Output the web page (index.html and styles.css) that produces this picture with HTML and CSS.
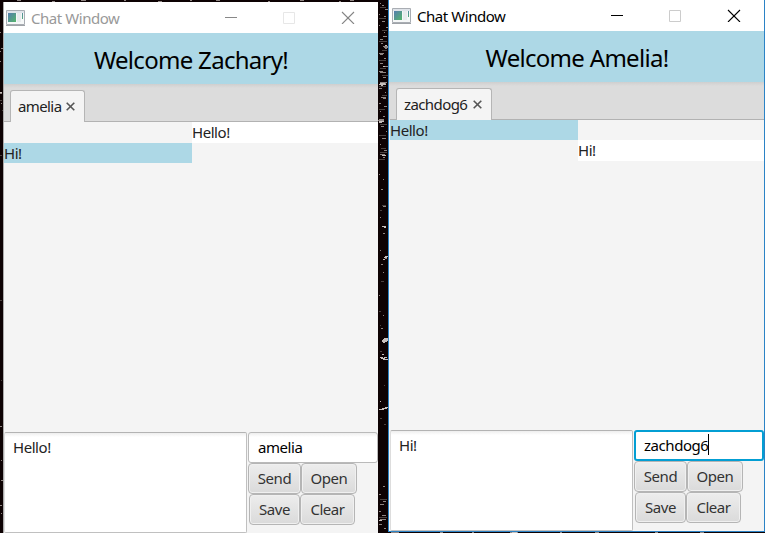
FILE: index.html
```html
<!DOCTYPE html>
<html lang="en">
<head>
<meta charset="utf-8">
<title>Chat Window</title>
<link rel="stylesheet" href="styles.css">
</head>
<body>
<main class="desktop">
  <svg class="speckles" width="765" height="533" viewBox="0 0 765 533" shape-rendering="crispEdges" aria-hidden="true">
    <path stroke="#8f8582" d="M380 3.5h1M382 5.5h2M385 9.5h3M379 14.5h1M384 16.5h2M382 21.5h3M379 25.5h1M386 27.5h2M384 32.5h1M383 36.5h4M380 39.5h3M381 43.5h2M383 46.5h5M384 47.5h4M385 48.5h2M379 53.5h5M380 54.5h3M384 58.5h2M380 63.5h3M385 66.5h3M379 71.5h4M380 72.5h6M383 77.5h3M380 82.5h7M381 83.5h5M379 88.5h3M385 92.5h1M381 97.5h5M383 98.5h3M379 103.5h2M384 106.5h3M380 111.5h1M383 116.5h2M379 119.5h5M378 120.5h6M381 126.5h3M386 131.5h1M382 138.5h4M380 144.5h1M384 150.5h3M380 154.5h5M383 157.5h2M379 174.5h1M383 179.5h1M381 189.5h2M383 206.5h3M380 217.5h1M383 233.5h2M380 250.5h1M385 258.5h2M381 264.5h2M383 272.5h1M379 295.5h1M383 315.5h1M381 328.5h2M383 486.5h2M379 494.5h2M383 501.5h3M380 504.5h4M379 511.5h2M382 515.5h4M380 519.5h6M379 524.5h3M384 528.5h2M0 32.5h1M1 48.5h2M0 51.5h1M0 61.5h1M0 93.5h2M1 103.5h1M0 426.5h2M1 460.5h1M1 480.5h2M0 505.5h2M1 513.5h1M17 .5h4M52 1.5h3M81 .5h5M124 .5h2M158 1.5h4M190 .5h2M216 .5h4M268 1.5h2M300 .5h4M339 1.5h2M350 .5h4M391 532.5h8M440 532.5h3M472 532.5h2M510 532.5h8M560 532.5h2M595 532.5h4M655 532.5h3M700 532.5h4"/>
    <path stroke="#c8c0bd" d="M380 83.5h5M379 84.5h7M381 85.5h2M379 121.5h5M379 122.5h3M383 66.5h2M385 45.5h2M382 226.5h4M384 227.5h2M385 256.5h3M384 257.5h3M383 259.5h2M384 338.5h4M383 339.5h5M382 340.5h6M382 341.5h5M383 342.5h2M382 354.5h2M380 357.5h3M384 357.5h3M381 358.5h4M383 359.5h5M380 401.5h1M379 409.5h5M385 407.5h3M382 408.5h5M382 155.5h4M0 92.5h2M379 520.5h3M512 532.5h5"/>
    <path stroke="#4a413f" d="M380 7.5h6M379 18.5h7M382 30.5h5M379 41.5h8M382 50.5h5M379 60.5h7M380 68.5h6M382 75.5h6M379 86.5h7M382 95.5h5M379 109.5h6M380 124.5h7M379 135.5h7M381 148.5h5M380 152.5h7M379 159.5h6M382 205.5h4M380 210.5h2M381 281.5h3M379 311.5h2M380 325.5h1M380 351.5h2M384 385.5h1M380 418.5h2M384 424.5h2M380 499.5h7M379 517.5h8M0 100.5h2M2 110.5h1M0 155.5h2M0 300.5h2M1 380.5h1"/>
  </svg>

  <section class="window window-left">
    <header class="titlebar">
      <svg class="app-icon" width="19" height="16" viewBox="0 0 19 16"><defs><linearGradient id="pane" x2="1" y2="1"><stop stop-color="#557db0"/><stop offset="1" stop-color="#55b56b"/></linearGradient></defs><path fill="#f6f8f8" stroke="#a9adb3" d="M.5.5h18v14H.5z"/><path fill="#dfe3e9" d="M1 1h17v2H1z"/><path fill="url(#pane)" d="M2 3h8v9H2z"/><path fill="#e8ebed" d="M11 3h4v9h-4z"/><path fill="url(#pane)" d="M16 3h1v6h-1z"/><path stroke="#9ea2a7" d="M0 15.5h19"/></svg>
      <span class="title text">Chat Window</span>
      <svg class="controls" width="130" height="13" viewBox="0 0 130 13" fill="none"><path stroke="#888" d="M0 6.5h12"/><path stroke="#e7e7e7" d="M58.5 1.5h11v11h-11z"/><path stroke="#858585" stroke-width="1.1" d="M117 1l12 12M129 1L117 13"/></svg>
    </header>
    <div class="banner"><h1 class="welcome text">Welcome Zachary!</h1></div>
    <nav class="tabs"><div class="tab"><span class="text tab-name">amelia</span><svg class="close" width="9" height="9" viewBox="0 0 9 9"><path stroke="#555" stroke-width="1.6" d="M.7.7l7.6 7.6M8.3.7L.7 8.3"/></svg></div></nav>
    <div class="messages">
      <div class="message sent"><span class="text">Hello!</span></div>
      <div class="message received"><span class="text">Hi!</span></div>
    </div>
    <footer class="composer">
      <div class="draft"><span class="text">Hello!</span></div>
      <div class="side">
        <div class="recipient"><span class="text">amelia</span></div>
        <div class="row"><button class="send"><span class="text">Send</span></button><button class="open"><span class="text">Open</span></button></div>
        <div class="row second"><button class="save"><span class="text">Save</span></button><button class="clear"><span class="text">Clear</span></button></div>
      </div>
    </footer>
  </section>

  <section class="window window-right">
    <header class="titlebar">
      <svg class="app-icon" width="19" height="16" viewBox="0 0 19 16"><path fill="#f6f8f8" stroke="#a9adb3" d="M.5.5h18v14H.5z"/><path fill="#dfe3e9" d="M1 1h17v2H1z"/><path fill="url(#pane)" d="M2 3h8v9H2z"/><path fill="#e8ebed" d="M11 3h4v9h-4z"/><path fill="url(#pane)" d="M16 3h1v6h-1z"/><path stroke="#9ea2a7" d="M0 15.5h19"/></svg>
      <span class="title text">Chat Window</span>
      <svg class="controls" width="130" height="13" viewBox="0 0 130 13" fill="none"><path stroke="#000" d="M0 6.5h12"/><path stroke="#ccc" d="M58.5 1.5h11v11h-11z"/><path stroke="#000" stroke-width="1.1" d="M117 1l12 12M129 1L117 13"/></svg>
    </header>
    <div class="banner"><h1 class="welcome text">Welcome Amelia!</h1></div>
    <nav class="tabs"><div class="tab"><span class="text tab-name">zachdog6</span><svg class="close" width="9" height="9" viewBox="0 0 9 9"><path stroke="#555" stroke-width="1.6" d="M.7.7l7.6 7.6M8.3.7L.7 8.3"/></svg></div></nav>
    <div class="messages">
      <div class="message received"><span class="text">Hello!</span></div>
      <div class="message sent"><span class="text">Hi!</span></div>
    </div>
    <footer class="composer">
      <div class="draft"><span class="text">Hi!</span></div>
      <div class="side">
        <div class="recipient focused"><span class="text">zachdog6</span><i class="caret"></i></div>
        <div class="row"><button class="send"><span class="text">Send</span></button><button class="open"><span class="text">Open</span></button></div>
        <div class="row second"><button class="save"><span class="text">Save</span></button><button class="clear"><span class="text">Clear</span></button></div>
      </div>
    </footer>
  </section>
</main>
</body>
</html>
```
FILE: styles.css
```css
* { box-sizing: border-box; }
body { margin: 0; font: 15px/20px "Noto Sans", "Open Sans", sans-serif; color: #222; }
.desktop { position: relative; width: 765px; height: 533px; overflow: hidden; background: #0d0203; }
.speckles { position: absolute; inset: 0; }
.text { display: inline-block; flex: none; white-space: nowrap; letter-spacing: -0.45px; }

.window { position: absolute; display: flex; flex-direction: column; background: #f4f4f4; }
.window-left { left: 3px; top: 2px; width: 375px; height: 531px; border-left: 1px solid #aaa; }
.window-right { left: 388px; top: 0; width: 377px; height: 532px; border: solid #2b83c6; border-width: 0 1px 1px; }
.window-right > * { border-left: 1px solid transparent; }

.titlebar { flex: none; display: flex; align-items: center; height: 31px; padding-left: 2px; background: #fff; }
.app-icon { flex: none; margin-right: 6px; }
.title { color: #000; }
.window-left .title { color: #999; }
.controls { margin-left: auto; margin-right: 23px; flex: none; }

.banner { flex: none; display: flex; align-items: center; justify-content: center; height: 51px; background: #add8e6; }
.welcome { margin: 2px 0 0; font-size: 24px; line-height: 34px; font-weight: 400; color: #000; letter-spacing: -0.7px; }

.tabs { flex: none; display: flex; align-items: flex-end; height: 38px; padding-left: 6px; background: linear-gradient(#cfcfcf, #dcdcdc 4px); box-shadow: inset 0 -1px #b2b2b2; }
.tab { display: flex; align-items: center; height: 32px; width: 75px; padding-left: 7px; border: 1px solid #b5b5b5; border-bottom: 0; border-radius: 3px 3px 0 0; background: #f4f4f4; }
.window-right .tab { width: 96px; }
.tab-name { letter-spacing: -0.6px; margin-top: -2px; }
.close { margin: 0 9px 1px auto; }

.messages { flex: 1; display: flex; flex-direction: column; }
.message { width: 188px; height: 20px; line-height: 21px; background: #add8e6; }
.message.sent { align-self: flex-end; width: 186px; height: 21px; background: #fff; }

.composer { flex: none; display: flex; height: 101px; }
.draft { width: 243px; padding: 4px 8px; background: linear-gradient(#eee, #fff 4px); border: 1px solid #c0c0c0; border-top-color: #b3b3b3; border-left-color: #ddd; border-radius: 2px; }
.side { width: 131px; padding-left: 1px; }
.recipient { display: flex; align-items: center; height: 31px; padding: 0 0 2px 9px; color: #000; background: linear-gradient(#eee, #fff 4px); border: 1px solid #bababa; border-radius: 3px; }
.recipient.focused { border: 2px solid #039ed3; padding-left: 8px; background: #fff; }
.caret { width: 1px; height: 21px; background: #000; }
.row { display: flex; height: 31px; }
.row.second { padding-left: 1px; }
button { flex: none; display: flex; align-items: center; justify-content: center; height: 31px; padding: 0 0 2px; font: inherit; color: #333; border: 1px solid #b5b5b5; border-radius: 4px; background: linear-gradient(#ededed, #dadada); box-shadow: inset 0 0 0 1px #f0f0f0; }
.send { width: 53px; }
.open { width: 56px; }
.save { width: 51px; }
.clear { width: 55px; }
```
